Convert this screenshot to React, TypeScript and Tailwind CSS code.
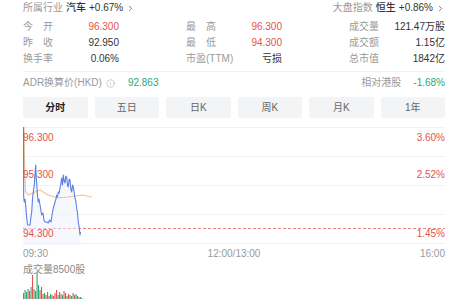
import React from "react";
import { ChevronRight, Info } from "lucide-react";

const blue: [number, number][] = [
  [0.5, 0], [0.7, 70], [1.3, 75], [2, 72], [2.7, 78], [3.6, 90], [4.7, 98], [7, 98], [8.2, 88], [8.7, 85], [9.5, 72],
  [10.3, 65], [11.3, 58], [11.8, 50], [12.7, 38], [13.2, 50], [14, 61], [14.6, 70], [15.3, 75], [16, 72], [17, 78],
  [18, 84], [18.7, 88], [20, 86], [21, 93], [22, 95], [23.5, 95], [25.3, 96], [26.5, 93], [28, 95], [29, 88],
  [30.3, 81], [31.2, 78], [32, 75], [33, 72], [33.7, 68], [34.5, 70], [35.3, 65], [36.2, 66], [37, 61], [37.8, 57],
  [38.7, 51], [39.5, 58], [40.3, 48], [41.2, 54], [42, 56], [42.8, 49], [43.7, 50], [44.5, 58], [45.3, 60], [46.2, 52],
  [47, 53], [47.8, 62], [48.7, 65], [49.5, 58], [50.3, 60], [51.2, 66], [52, 71], [52.8, 74], [53.7, 81], [54.5, 86],
  [55.3, 95], [56.2, 100], [57, 108], [57.5, 105],
];
const orange: [number, number][] = [
  [1, 0], [1.6, 40], [2.5, 64], [5, 68], [12, 65], [17, 63], [25, 68], [35, 71], [45, 70], [59, 68], [69, 70],
];

const bars: [number, string][] = [
  [6, "r"], [9, "g"], [7, "g"], [10, "r"], [8, "r"], [12, "g"], [24, "r"], [10, "g"], [8, "r"], [26, "g"],
  [14, "g"], [9, "r"], [12, "g"], [5, "r"], [6, "g"], [4, "r"], [7, "g"], [3, "r"], [5, "g"], [4, "r"],
  [3, "g"], [6, "r"], [9, "r"], [4, "g"], [7, "r"], [5, "r"], [4, "g"], [8, "r"], [6, "r"], [3, "g"],
  [5, "r"], [4, "g"], [3, "r"], [6, "g"], [4, "r"], [5, "g"], [3, "g"], [2, "r"], [2, "g"], [1, "g"],
];

const pts = (a: [number, number][]) => a.map(([x, y]) => `${x},${y}`).join(" ");

function Cell({ label, value, valueClass, spread }: { label: string; value: string; valueClass?: string; spread?: boolean }) {
  return (
    <div className="flex h-[16px] items-center justify-between">
      {spread ? (
        <span className="flex w-[30px] justify-between text-[#9a9a9a]">
          <span>{label[0]}</span>
          <span>{label[1]}</span>
        </span>
      ) : (
        <span className="text-[#9a9a9a]">{label}</span>
      )}
      <span className={valueClass ?? "text-[#333333]"}>{value}</span>
    </div>
  );
}

export default function App() {
  const tabs = ["分时", "五日", "日K", "周K", "月K", "1年"];
  return (
    <div className="h-[305px] w-[474px] overflow-hidden bg-white pl-[23px] pr-[29px] text-[10px] leading-[12px] font-[family-name:'Liberation_Sans','Noto_Sans_CJK_SC',sans-serif]">
      <div className="flex h-[16px] items-center justify-between">
        <div className="flex items-center gap-[3px]">
          <span className="text-[#9a9a9a]">所属行业</span>
          <span className="font-medium text-[#333]">汽车</span>
          <span className="text-[#333]">+0.67%</span>
          <ChevronRight size={9} strokeWidth={2} className="text-[#555]" />
        </div>
        <div className="flex items-center gap-[3px]">
          <span className="text-[#9a9a9a]">大盘指数</span>
          <span className="font-medium text-[#333]">恒生</span>
          <span className="text-[#333]">+0.86%</span>
          <ChevronRight size={9} strokeWidth={2} className="text-[#555]" />
        </div>
      </div>

      <div className="mt-[3px] grid grid-cols-[96px_96px_96px] gap-x-[67px]">
        <Cell label="今开" spread value="96.300" valueClass="text-[#e5534b]" />
        <Cell label="最高" spread value="96.300" valueClass="text-[#e5534b]" />
        <Cell label="成交量" value="121.47万股" />
        <Cell label="昨收" spread value="92.950" />
        <Cell label="最低" spread value="94.300" valueClass="text-[#e5534b]" />
        <Cell label="成交额" value="1.15亿" />
        <Cell label="换手率" value="0.06%" />
        <Cell label="市盈(TTM)" value="亏损" />
        <Cell label="总市值" value="1842亿" />
      </div>

      <div className="mt-[4px] border-t border-[#f2f2f2]" />

      <div className="mt-[3px] flex h-[16px] items-center justify-between">
        <div className="flex items-center">
          <span className="text-[#9a9a9a]">ADR换算价(HKD)</span>
          <Info size={9} strokeWidth={1.5} className="ml-[4px] text-[#aaa]" />
          <span className="ml-[13px] text-[#2aa876]">92.863</span>
        </div>
        <div className="flex items-center">
          <span className="text-[#9a9a9a]">相对港股</span>
          <span className="ml-[12px] text-[#2aa876]">-1.68%</span>
        </div>
      </div>

      <div className="mt-[6px] grid h-[21px] grid-cols-6 gap-[7px]">
        {tabs.map((t, i) => (
          <div
            key={t}
            className={`flex items-center justify-center rounded-[2px] bg-[#f3f4f6] ${i === 0 ? "font-bold text-[#222]" : "text-[#666]"}`}
          >
            {t}
          </div>
        ))}
      </div>

      <div className="relative mt-[9px] h-[118px]">
        <svg width="422" height="118" viewBox="0 0 422 118" className="block">
          {[0, 29, 58, 87, 116].map((y) => (
            <line key={y} x1="0" x2="422" y1={y + 0.5} y2={y + 0.5} stroke="#f2f2f2" strokeWidth="1" />
          ))}
          <line x1="0" x2="422" y1="101.5" y2="101.5" stroke="#ef8080" strokeWidth="1" strokeDasharray="3 2" />
          <polygon points={`0.5,118 ${pts(blue)} 57.5,118`} fill="#eef2fd" opacity="0.5" />
          <polyline points={pts(orange)} fill="none" stroke="#f2c28e" strokeWidth="1.1" />
          <polyline points={pts(blue)} fill="none" stroke="#5b7fe3" strokeWidth="1.1" strokeLinejoin="round" />
        </svg>
        <span className="absolute left-0 top-[5px] text-[#e5534b]">96.300</span>
        <span className="absolute left-0 top-[42px] text-[#e5534b]">95.300</span>
        <span className="absolute left-0 top-[101px] text-[#e5534b]">94.300</span>
        <span className="absolute right-0 top-[5px] text-[#e5534b]">3.60%</span>
        <span className="absolute right-0 top-[42px] text-[#e5534b]">2.52%</span>
        <span className="absolute right-0 top-[101px] text-[#e5534b]">1.45%</span>
      </div>

      <div className="mt-[2px] flex h-[14px] items-center justify-between text-[#9a9a9a]">
        <span>09:30</span>
        <span>12:00/13:00</span>
        <span>16:00</span>
      </div>

      <div className="mt-[2px] flex h-[14px] items-center text-[#8a8a8a]">成交量8500股</div>

      <svg width="422" height="27" viewBox="0 0 422 27" className="-mt-[4px] block">
        {bars.map(([h, c], i) => (
          <rect
            key={i}
            x={i * 1.5}
            y={26 - h}
            width="1.1"
            height={h}
            fill={c === "r" ? "#e5534b" : "#2aa876"}
          />
        ))}
      </svg>
    </div>
  );
}
